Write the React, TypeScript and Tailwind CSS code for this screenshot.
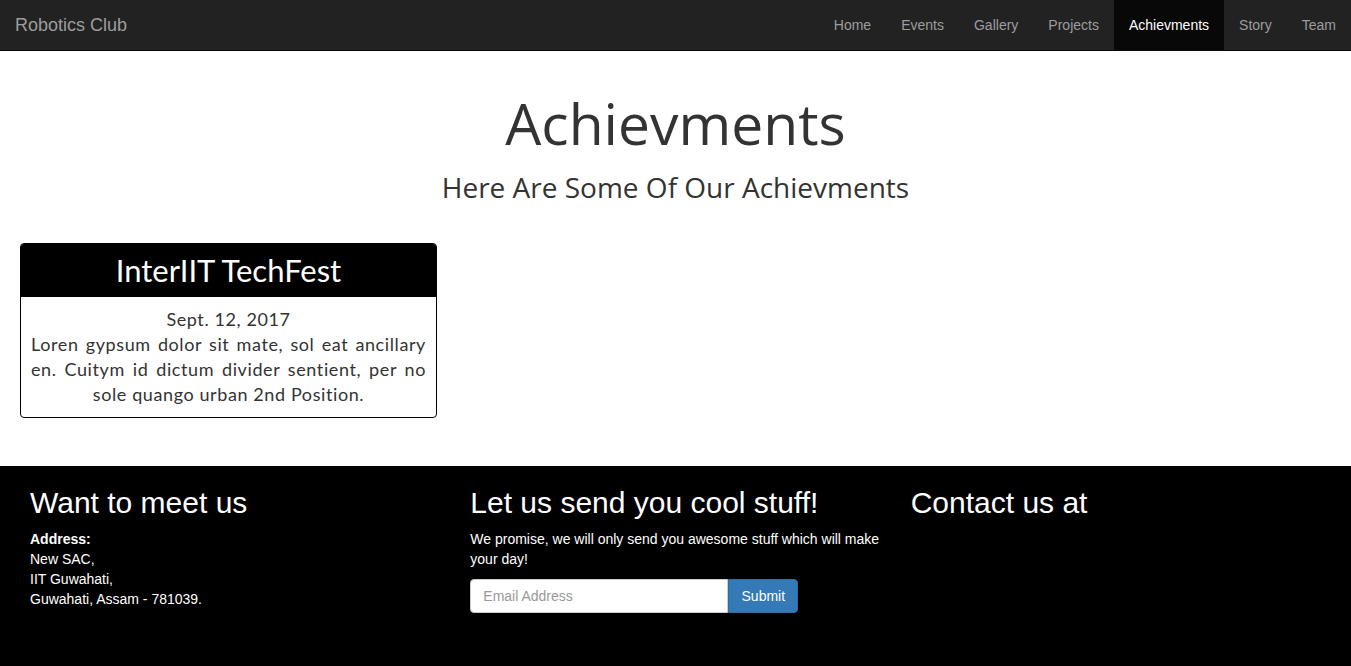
const navItems = ['Home', 'Events', 'Gallery', 'Projects', 'Achievments', 'Story', 'Team']

const App = () => {
  return (
    <div className="min-h-[666px] flex flex-col bg-white font-['Liberation_Sans',Arial,sans-serif] text-[14px] leading-[20px] text-[#333]">
      {/* navbar */}
      <nav className="h-[51px] bg-[#222] border-b border-[#080808] flex items-stretch justify-between">
        <a className="px-[15px] flex items-center text-[18px] text-[#9d9d9d]">Robotics Club</a>
        <ul className="flex items-stretch">
          {navItems.map((item) => (
            <li
              key={item}
              className={
                item === 'Achievments'
                  ? 'px-[15px] flex items-center bg-[#080808] text-white'
                  : 'px-[15px] flex items-center text-[#9d9d9d]'
              }
            >
              {item}
            </li>
          ))}
        </ul>
      </nav>

      {/* main */}
      <main className="pb-[48px]">
        <div className="text-center pt-[36px] font-['Open_Sans',sans-serif] text-[#333]">
          <h1 className="text-[57px] leading-[72px]">Achievments</h1>
          <h3 className="text-[28px] leading-[40px] mt-[8px]">Here Are Some Of Our Achievments</h3>
        </div>

        <div className="px-[20px] mt-[36px]">
          <div className="w-[417px] border border-black rounded-[4px] overflow-hidden font-['Lato',sans-serif]">
            <div className="bg-black text-white text-center text-[31px] leading-[52px]">InterIIT TechFest</div>
            <div className="border-t border-black px-[10px] pt-[10px] pb-[10px] text-[18px] leading-[25px] text-[#333] tracking-[0.6px]">
              <p className="text-center">Sept. 12, 2017</p>
              <p className="text-justify [text-align-last:center]">
                Loren gypsum dolor sit mate, sol eat ancillary en. Cuitym id dictum divider sentient, per no sole quango urban 2nd Position.
              </p>
            </div>
          </div>
        </div>
      </main>

      {/* footer */}
      <footer className="flex-1 bg-black text-white px-[15px]">
        <div className="grid grid-cols-3">
          <div className="px-[15px]">
            <h2 className="text-[30px] leading-[33px] mt-[20px] mb-[10px]">Want to meet us</h2>
            <p>
              <b>Address:</b>
              <br />
              New SAC,
              <br />
              IIT Guwahati,
              <br />
              Guwahati, Assam - 781039.
            </p>
          </div>
          <div className="px-[15px]">
            <h2 className="text-[30px] leading-[33px] mt-[20px] mb-[10px]">Let us send you cool stuff!</h2>
            <p>We promise, we will only send you awesome stuff which will make your day!</p>
            <div className="flex mt-[10px]">
              <input
                placeholder="Email Address"
                className="w-[258px] h-[34px] bg-white rounded-l-[4px] border border-[#ccc] px-[12px] text-[14px] text-[#555] placeholder:text-[#999] outline-none"
              />
              <button className="h-[34px] w-[70px] bg-[#337ab7] border border-[#2e6da4] rounded-r-[4px] text-white text-[14px]">Submit</button>
            </div>
          </div>
          <div className="px-[15px]">
            <h2 className="text-[30px] leading-[33px] mt-[20px] mb-[10px]">Contact us at</h2>
          </div>
        </div>
      </footer>
    </div>
  )
}

export default App
